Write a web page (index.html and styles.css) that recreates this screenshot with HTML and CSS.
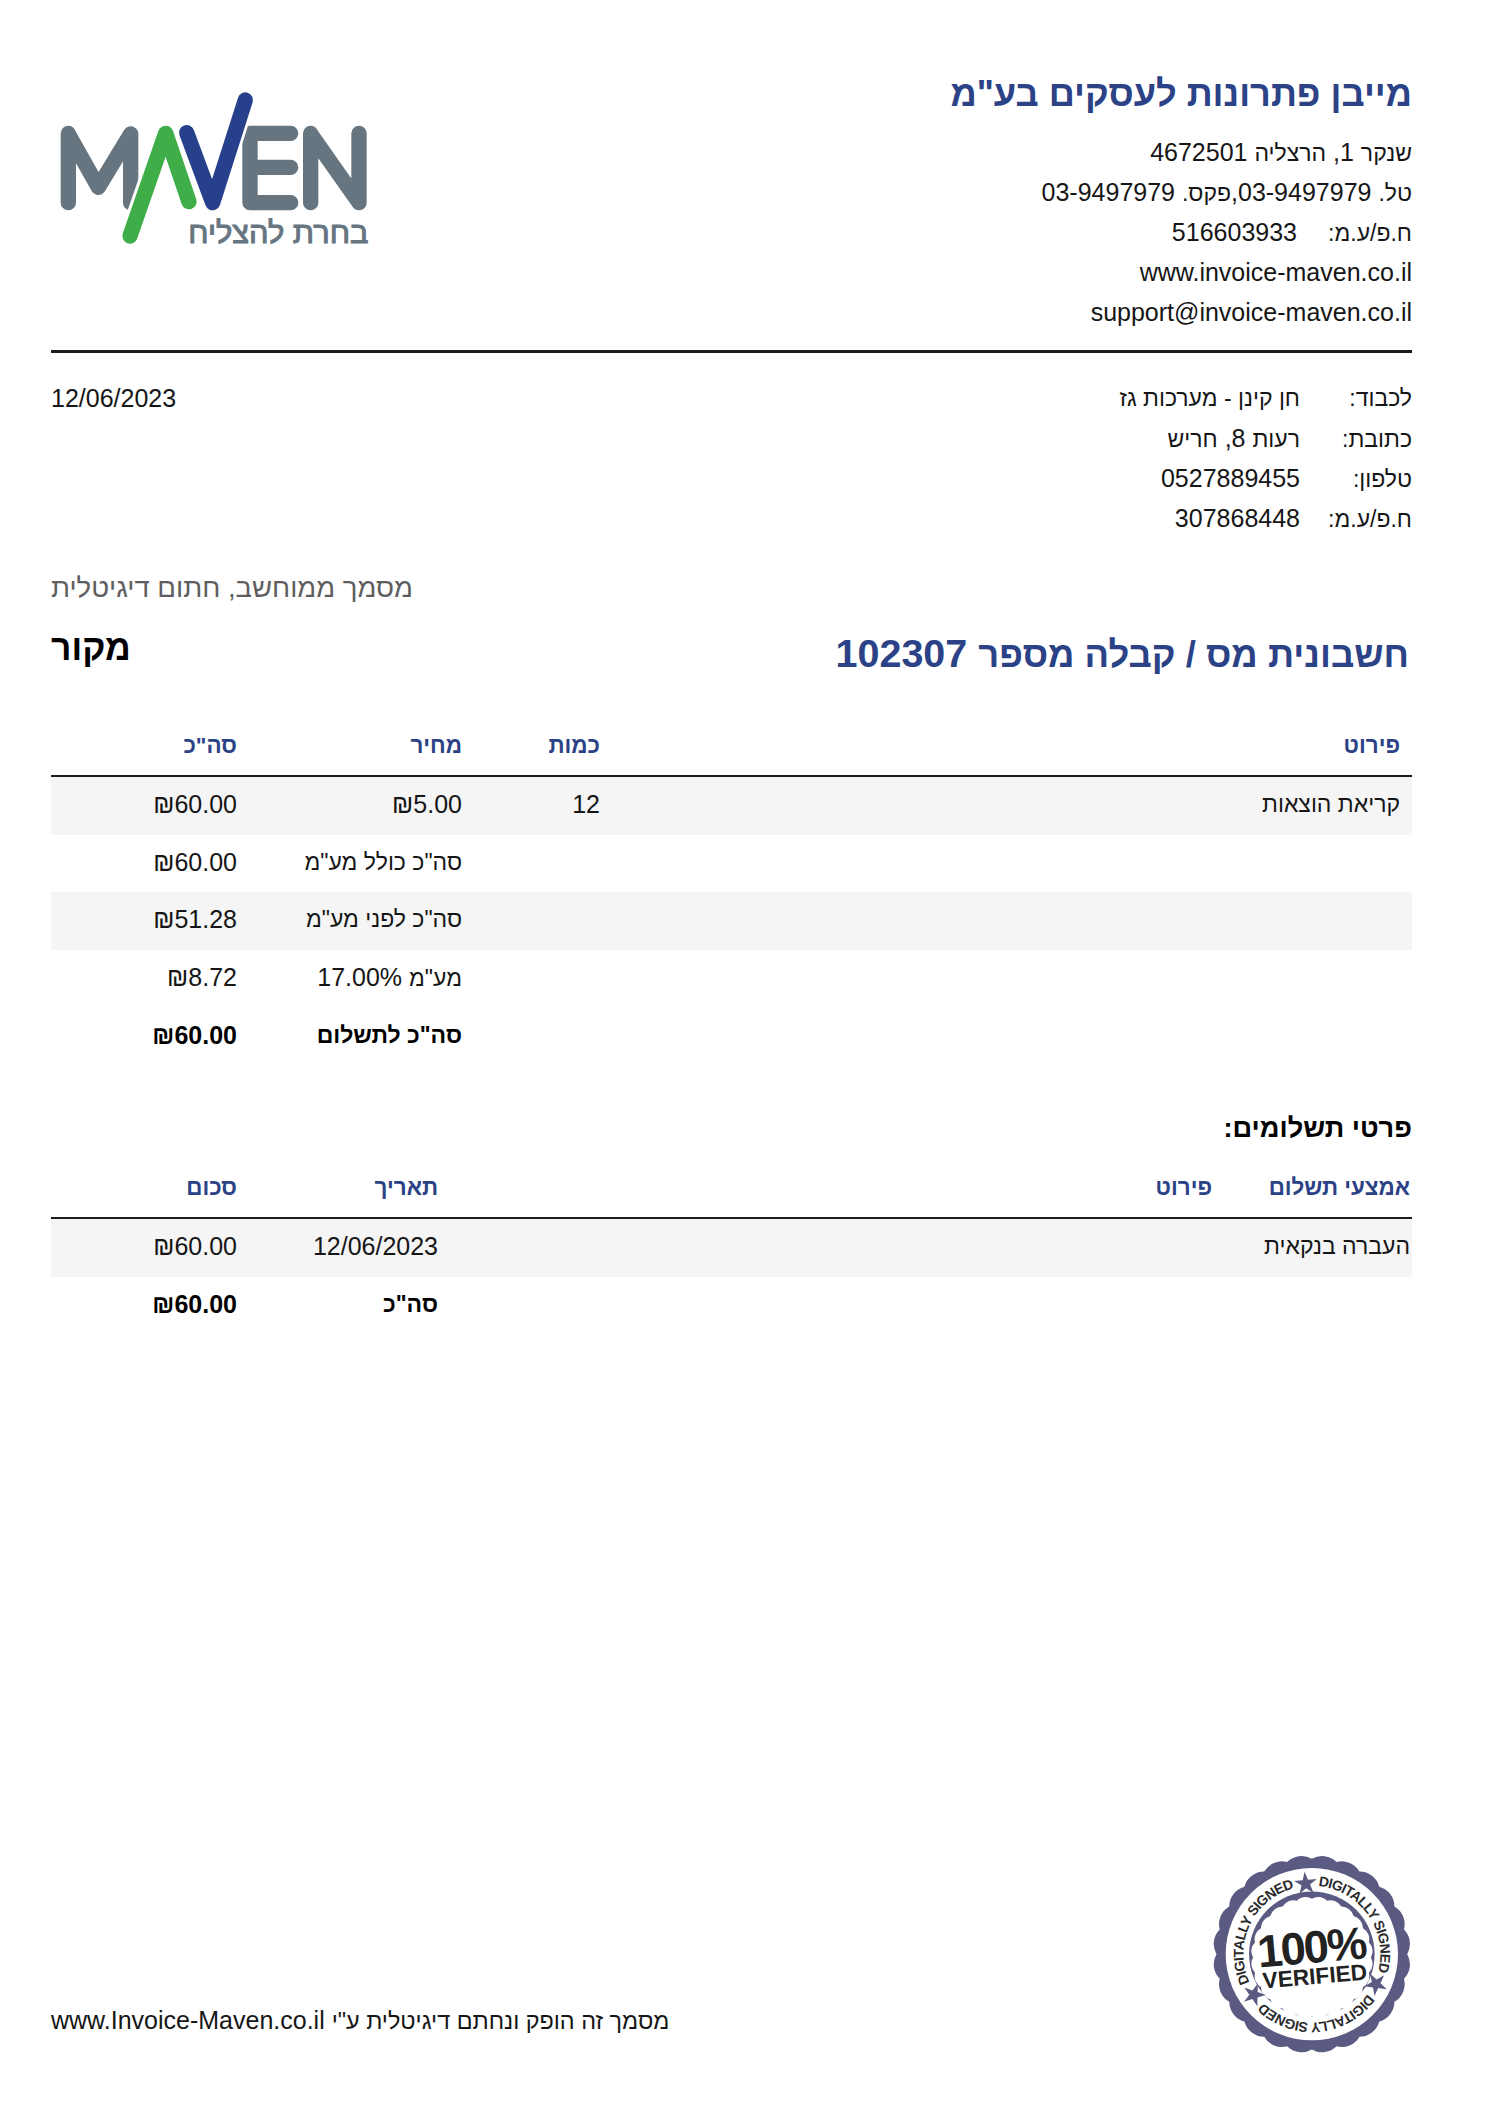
FILE: index.html
```html
<!DOCTYPE html>
<html lang="he" dir="rtl">
<head>
<meta charset="utf-8">
<title>חשבונית מס / קבלה</title>
<link rel="stylesheet" href="styles.css">
</head>
<body>
<main class="page">
  <header class="top">
    <div class="company">
      <h1 class="company-name">מייבן פתרונות לעסקים בע"מ</h1>
      <div class="line"><span class="hi">שנקר</span> 1, <span class="hi">הרצליה</span> 4672501</div>
      <div class="line"><span class="hi">טל.</span> 03-9497979,<span class="hi">פקס.</span> 03-9497979</div>
      <div class="pair"><span class="label he">ח.פ/ע.מ:</span><span>516603933</span></div>
      <div class="line">www.invoice-maven.co.il</div>
      <div class="line">support@invoice-maven.co.il</div>
    </div>
    <svg class="logo" viewBox="63 90 960 480" role="img" aria-label="Maven">
      <g fill="none" stroke-linecap="round" stroke-linejoin="round">
        <path stroke="#66757f" stroke-width="46" d="M115 220V428M115 222L205 382L302 222V428"/>
        <path stroke="#66757f" stroke-width="46" d="M660 220H782M660 322H782M660 428H782M660 220V428"/>
        <path stroke="#66757f" stroke-width="46" d="M842 220V428M842 222L987 428M987 220V428"/>
        <path stroke="#fff" stroke-width="64" d="M300 528L407 220L477 425"/>
        <path stroke="#3fae49" stroke-width="46" d="M300 528L407 220L477 425"/>
        <path stroke="#fff" stroke-width="62" d="M470 218L548 428L646 120"/>
        <path stroke="#27408b" stroke-width="46" d="M470 218L548 428L646 120"/>
      </g>
      <text class="tagline" x="1015" y="550" textLength="540" lengthAdjust="spacingAndGlyphs">בחרת להצליח</text>
    </svg>
  </header>

  <section class="client">
    <div class="client-rows">
      <div class="row"><span class="label-c he">לכבוד:</span><span class="he">חן קינן - מערכות גז</span></div>
      <div class="row"><span class="label-c he">כתובת:</span><span><span class="hi">רעות</span> 8, <span class="hi">חריש</span></span></div>
      <div class="row"><span class="label-c he">טלפון:</span><span>0527889455</span></div>
      <div class="row"><span class="label-c he">ח.פ/ע.מ:</span><span>307868448</span></div>
    </div>
    <div class="row">12/06/2023</div>
  </section>

  <p class="note">מסמך ממוחשב, חתום דיגיטלית</p>

  <div class="doc-row">
    <h2 class="doc-title"><span class="doc-he">חשבונית מס / קבלה מספר</span> 102307</h2>
    <div class="doc-kind">מקור</div>
  </div>

  <table class="items">
    <thead>
      <tr><th class="c-detail">פירוט</th><th class="c-qty">כמות</th><th class="c-price">מחיר</th><th class="c-total">סה"כ</th></tr>
    </thead>
    <tbody>
      <tr class="alt"><td class="c-detail he">קריאת הוצאות</td><td class="c-qty">12</td><td class="c-price">₪5.00</td><td class="c-total">₪60.00</td></tr>
      <tr><td></td><td></td><td class="c-price he">סה"כ כולל מע"מ</td><td class="c-total">₪60.00</td></tr>
      <tr class="alt"><td></td><td></td><td class="c-price he">סה"כ לפני מע"מ</td><td class="c-total">₪51.28</td></tr>
      <tr><td></td><td></td><td class="c-price"><span class="hi">מע"מ</span> 17.00%</td><td class="c-total">₪8.72</td></tr>
      <tr class="strong"><td></td><td></td><td class="c-price he">סה"כ לתשלום</td><td class="c-total">₪60.00</td></tr>
    </tbody>
  </table>

  <h3 class="pay-title">פרטי תשלומים:</h3>

  <table class="items payments">
    <thead>
      <tr><th class="p-method">אמצעי תשלום</th><th class="p-detail">פירוט</th><th class="p-date">תאריך</th><th class="c-total">סכום</th></tr>
    </thead>
    <tbody>
      <tr class="alt"><td class="p-method he">העברה בנקאית</td><td></td><td class="p-date">12/06/2023</td><td class="c-total">₪60.00</td></tr>
      <tr class="strong"><td></td><td></td><td class="p-date he">סה"כ</td><td class="c-total">₪60.00</td></tr>
    </tbody>
  </table>

  <footer class="bottom">
    <svg class="seal" viewBox="45 28 620 620" role="img" aria-label="100% verified">
      <defs>
        <path id="arc" d="M365 135A205 205 0 1 1 364.9 135"/>
        <path id="scallop" d="M365 60A60 60 0 0 1 437.5 69.5A60 60 0 0 1 505 97.5A60 60 0 0 1 563 142A60 60 0 0 1 607.5 200A60 60 0 0 1 635.5 267.5A60 60 0 0 1 645 340A60 60 0 0 1 635.5 412.5A60 60 0 0 1 607.5 480A60 60 0 0 1 563 538A60 60 0 0 1 505 582.5A60 60 0 0 1 437.5 610.5A60 60 0 0 1 365 620A60 60 0 0 1 292.5 610.5A60 60 0 0 1 225 582.5A60 60 0 0 1 167 538A60 60 0 0 1 122.5 480A60 60 0 0 1 94.5 412.5A60 60 0 0 1 85 340A60 60 0 0 1 94.5 267.5A60 60 0 0 1 122.5 200A60 60 0 0 1 167 142A60 60 0 0 1 225 97.5A60 60 0 0 1 292.5 69.5A60 60 0 0 1 365 60Z"/>
      </defs>
      <use href="#scallop" class="seal-dark" transform="translate(-7.3 -6.8) scale(1.02)"/>
      <circle cx="365" cy="340" r="258" fill="#fff"/>
      <circle cx="365" cy="340" r="188" class="seal-dark"/>
      <use href="#scallop" class="seal-white" transform="translate(135.4 136) scale(.63)"/>
      <g class="seal-ring">
        <g transform="rotate(-5 365 340)">
          <text><textPath href="#arc" startOffset="16.67%">DIGITALLY SIGNED</textPath></text>
          <path class="seal-star" d="M365 92L373 117H399L378 132L386 157L365 142L344 157L352 132L331 117H357Z"/>
        </g>
        <g transform="rotate(115 365 340)">
          <text><textPath href="#arc" startOffset="16.67%">DIGITALLY SIGNED</textPath></text>
          <path class="seal-star" d="M365 92L373 117H399L378 132L386 157L365 142L344 157L352 132L331 117H357Z"/>
        </g>
        <g transform="rotate(235 365 340)">
          <text><textPath href="#arc" startOffset="16.67%">DIGITALLY SIGNED</textPath></text>
          <path class="seal-star" d="M365 92L373 117H399L378 132L386 157L365 142L344 157L352 132L331 117H357Z"/>
        </g>
      </g>
      <g transform="rotate(-5 365 340)">
        <text class="seal-big" x="365" y="366">100%</text>
        <text class="seal-mid" x="368" y="430">VERIFIED</text>
      </g>
    </svg>
    <div class="foot-text"><span class="hi foot-he">מסמך זה הופק ונחתם דיגיטלית ע"י</span> www.Invoice-Maven.co.il</div>
  </footer>
</main>
</body>
</html>
```
FILE: styles.css
```css
* { box-sizing: border-box; }
html, body { margin: 0; padding: 0; background: #fff; }
body {
  font-family: "Liberation Sans", Arial, sans-serif;
  font-size: 25px;
  line-height: 40px;
  color: #161616;
  overflow: hidden;
}
.he { font-size: 23px; }
.hi { font-size: 23px; line-height: 1; }
.page {
  width: 1487px;
  height: 2105px;
  padding: 74px 75px 48px 51px;
  display: flex;
  flex-direction: column;
}
.top {
  display: flex;
  justify-content: space-between;
  align-items: flex-start;
  border-bottom: 3px solid #1c1c1c;
  padding-bottom: 18px;
}
.company-name {
  margin: 0 0 18px;
  font-size: 36.2px;
  line-height: 40px;
  font-weight: 700;
  color: #2b4286;
}
.line { white-space: nowrap; height: 40px; }
.pair { display: flex; align-items: baseline; height: 40px; }
.label { width: 115px; }
.logo { width: 320px; height: 160px; margin-top: 16px; }
.tagline {
  font-family: "Liberation Sans", sans-serif;
  font-size: 90px;
  fill: #66757f;
  stroke: #66757f;
  stroke-width: 3px;
}
.client {
  display: flex;
  justify-content: space-between;
  align-items: flex-start;
  padding-top: 25px;
}
.row { display: flex; align-items: baseline; height: 40px; }
.label-c { width: 112px; }
.note {
  margin: 30px 0 0;
  font-size: 27.5px;
  color: #5e5e5e;
  text-align: left;
}
.doc-row {
  display: flex;
  justify-content: space-between;
  align-items: flex-start;
  margin-top: 21px;
}
.doc-title {
  margin: 0;
  font-size: 39.5px;
  line-height: 48px;
  font-weight: 700;
  color: #2b4286;
  padding-inline-start: 3px;
}
.doc-he { font-size: 36.4px; line-height: 1; }
.doc-kind {
  font-size: 35.5px;
  font-weight: 700;
  line-height: 38px;
  color: #000;
}
.items {
  width: 100%;
  border-collapse: separate;
  border-spacing: 0;
  table-layout: fixed;
  margin-top: 37px;
}
.items th {
  height: 63px;
  padding: 2px 12px 0;
  font-size: 22.4px;
  font-weight: 700;
  color: #2b4286;
  text-align: right;
  border-bottom: 2px solid #1c1c1c;
}
.items td {
  height: 57.6px;
  padding: 0 12px 3px;
  text-align: right;
}
.alt td { background: #f5f5f5; }
.strong td { font-weight: 700; color: #000; }
.c-qty { width: 138px; }
.c-price { width: 225px; }
.c-total { width: 198px; }
.pay-title {
  margin: 43px 0 0;
  font-size: 27.2px;
  line-height: 40px;
  font-weight: 700;
  color: #000;
}
.payments { margin-top: 8px; }
.payments th { padding-top: 4px; }
.items .p-method { width: 188px; padding-right: 2px; }
.p-date { width: 201px; }
.bottom {
  margin-top: auto;
  display: flex;
  justify-content: space-between;
  align-items: flex-end;
}
.seal { width: 207px; height: 207px; overflow: visible; }
.foot-text { margin-bottom: 17px; white-space: nowrap; }
.foot-he { font-size: 23.4px; }
.seal-dark { fill: #5a5a82; }
.seal-white { fill: #fff; }
.seal-ring text {
  font-family: "Liberation Sans", sans-serif;
  font-size: 42px;
  font-weight: 700;
  letter-spacing: -2px;
  fill: #2a2a2a;
  text-anchor: middle;
}
.seal-star { fill: #5a5a82; }
.seal-big {
  font-family: "Liberation Sans", sans-serif;
  font-size: 136px;
  font-weight: 700;
  letter-spacing: -6px;
  fill: #222;
  text-anchor: middle;
}
.seal-mid {
  font-family: "Liberation Sans", sans-serif;
  font-size: 68px;
  font-weight: 700;
  fill: #222;
  text-anchor: middle;
}
```
